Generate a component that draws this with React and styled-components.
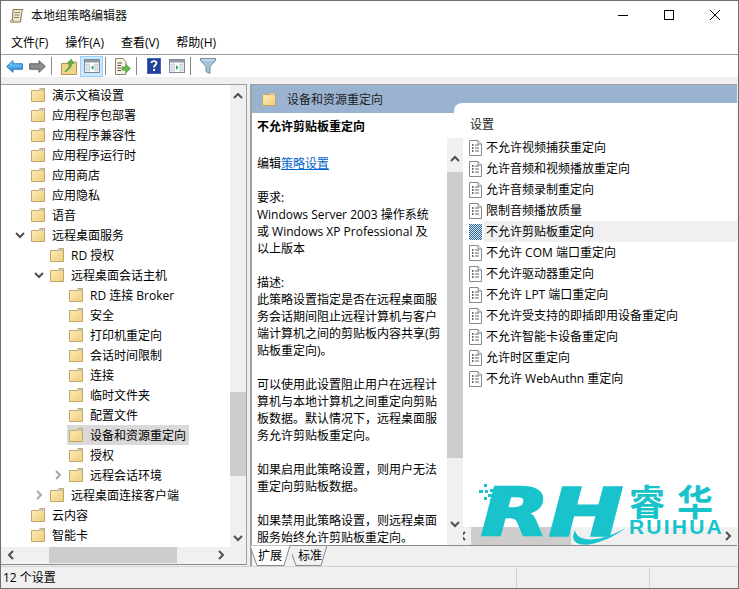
import React from 'react';
import styled, { createGlobalStyle } from 'styled-components';

const GlobalStyle = createGlobalStyle`
  html, body { margin: 0; padding: 0; background: #f0f0f0; }
  * { box-sizing: border-box; }
`;

const Window = styled.div`
  position: relative;
  width: 739px;
  height: 589px;
  display: flex;
  flex-direction: column;
  overflow: hidden;
  background: #f0f0f0;
  border: 1px solid #6f6f6f;
  color: #000;
  font: 12px/17px "Open Sans", "Noto Sans CJK SC", sans-serif;
`;

const TitleBar = styled.div`
  height: 29px;
  flex: none;
  display: flex;
  align-items: center;
  background: #fff;
  padding-left: 8px;
  color: #111;
`;

const TitleText = styled.span`
  margin-left: 6px;
  flex: 1;
  margin-top: -1px;
`;

const WinButton = styled.div`
  width: 46px;
  height: 29px;
  display: flex;
  align-items: center;
  justify-content: center;
  margin-top: -1px;
`;

const MenuBar = styled.div`
  height: 24px;
  flex: none;
  display: flex;
  align-items: center;
  gap: 17px;
  background: #fff;
  padding: 1px 0 0 10px;
`;

const ToolBar = styled.div`
  height: 23px;
  flex: none;
  display: flex;
  align-items: center;
  background: #fff;
  border-top: 1px solid #a0a0a0;
  padding-left: 2px;
  margin-bottom: 7px;
`;

const ToolButton = styled.div`
  width: 23px;
  height: 21px;
  display: flex;
  align-items: center;
  justify-content: center;
  background: ${p => (p.$active ? '#cce8ff' : 'transparent')};
  border: 1px solid ${p => (p.$active ? '#99d1ff' : 'transparent')};
`;

const ToolSep = styled.div`
  width: 1px;
  height: 18px;
  background: #888;
  margin: 0 5px 0 2px;
`;

const Main = styled.div`
  flex: 1;
  min-height: 0;
  display: flex;
  gap: 3px;
`;

const TreePane = styled.div`
  width: 246px;
  flex: none;
  display: flex;
  flex-direction: column;
  border-top: 1px solid #a0a0a0;
  border-right: 1px solid #a0a0a0;
  border-bottom: 1px solid #8a8a8a;
  margin-bottom: 1px;
`;

const TreeBody = styled.div`
  height: 462px;
  flex: none;
  display: flex;
  background: #fff;
`;

const TreeList = styled.div`
  flex: 1;
  overflow: hidden;
`;

const TreeRow = styled.div`
  height: 20px;
  display: flex;
  align-items: center;
  padding-left: ${p => 9 + p.$depth * 19}px;
`;

const Twist = styled.div`
  width: 19px;
  flex: none;
  display: flex;
  justify-content: center;
`;

const TreeLabel = styled.div`
  height: 20px;
  display: flex;
  align-items: center;
  gap: 7px;
  padding: 0 3px 0 2px;
  white-space: nowrap;
  background: ${p => (p.$selected ? '#d9d9d9' : 'transparent')};
`;

const VTrack = styled.div`
  width: ${p => p.$width}px;
  flex: none;
  display: flex;
  flex-direction: column;
  background: #f0f0f0;
  margin-top: ${p => p.$top || 0}px;
  position: relative;
  z-index: 1;
`;

const VThumb = styled.div`
  height: ${p => p.$size}px;
  margin-top: ${p => p.$offset}px;
  background: #cdcdcd;
  flex: none;
`;

const ArrowBox = styled.div`
  flex: none;
  height: ${p => (p.$h ? `${p.$h}px` : 'auto')};
  width: ${p => (p.$w ? `${p.$w}px` : 'auto')};
  margin-top: ${p => (p.$end ? 'auto' : '0')};
  margin-left: ${p => (p.$right ? 'auto' : '0')};
  display: flex;
  align-items: center;
  justify-content: center;
`;

const HTrack = styled.div`
  height: ${p => p.$height}px;
  flex: none;
  display: flex;
  background: #f0f0f0;
  padding-right: ${p => p.$corner || 0}px;
`;

const HThumb = styled.div`
  width: ${p => p.$size}px;
  margin-left: ${p => p.$offset}px;
  background: #cdcdcd;
  flex: none;
`;

const RightPane = styled.div`
  flex: 1;
  min-width: 0;
  display: flex;
  flex-direction: column;
  border-top: 1px solid #a0a0a0;
  border-left: 2px solid #a0a0a0;
  margin-right: 1px;
`;

const PaneHeader = styled.div`
  height: 28px;
  flex: none;
  display: flex;
  align-items: center;
  gap: 11px;
  padding: 0 0 0 10px;
  background: #9ab3d1;
  color: #222;
`;

const PaneBody = styled.div`
  height: 432px;
  flex: none;
  display: flex;
  background: #fff;
`;

const DescCol = styled.div`
  width: 195px;
  flex: none;
  overflow: hidden;
  padding: 5px 0 0 5px;
`;

const DescTitle = styled.div`
  font-weight: 700;
  margin-bottom: 20px;
`;

const DescPara = styled.p`
  margin: 0 0 17px;
  white-space: nowrap;
`;

const DescLine = styled.span`
  display: block;
`;

const PolicyLink = styled.a`
  color: #0066cc;
  text-decoration: underline;
`;

const ListCol = styled.div`
  flex: 1;
  min-width: 0;
  margin: -10px 0 0 -9px;
  display: flex;
  flex-direction: column;
  background: #fff;
  border-top-left-radius: 8px;
  position: relative;
`;

const ListArea = styled.div`
  height: 424px;
  flex: none;
  padding-left: 15px;
`;

const ListHeading = styled.div`
  height: 34px;
  padding: 13px 0 0 1px;
  color: #222;
`;

const ListRow = styled.div`
  height: 21px;
  display: flex;
  align-items: center;
`;

const ListLabel = styled.div`
  flex: 1;
  height: 21px;
  margin-left: 2px;
  padding-left: 2px;
  display: flex;
  align-items: center;
  white-space: nowrap;
  background: ${p => (p.$selected ? '#f0f0f0' : 'transparent')};
`;

const TabBar = styled.div`
  height: 21px;
  flex: none;
  display: flex;
  gap: 2px;
  border-top: 1px solid #8a8a8a;
  margin-left: -2px;
`;

const Tab = styled.div`
  position: relative;
  width: ${p => p.$width}px;
  height: 21px;
  margin-top: -1px;
  display: flex;
  align-items: center;
  justify-content: center;
`;

const TabShape = styled.svg`
  position: absolute;
  inset: 0;
`;

const TabText = styled.span`
  position: relative;
`;

const StatusBar = styled.div`
  height: 22px;
  flex: none;
  display: flex;
  align-items: center;
  border-top: 1px solid #d2d2d2;
`;

const StatusCell = styled.div`
  width: ${p => p.$width}px;
  height: 20px;
  padding-left: 2px;
  border-right: 1px solid #d2d2d2;
  display: flex;
  align-items: center;
`;

const Logo = styled.div`
  position: absolute;
  left: 477px;
  top: 481px;
  width: 250px;
  height: 66px;
  color: #18c3cb;
  pointer-events: none;
`;

const LogoMark = styled.span`
  position: absolute;
  left: 3px;
  top: -4px;
  font: italic 700 66px/70px "DejaVu Sans", sans-serif;
  transform: scaleX(1.34);
  transform-origin: left top;
  -webkit-text-stroke: 2.4px #18c3cb;
`;

const LogoCn = styled.span`
  position: absolute;
  left: 151px;
  top: 0;
  font: 700 36px/36px "Noto Sans CJK SC", sans-serif;
  letter-spacing: 12px;
  white-space: nowrap;
`;

const LogoEn = styled.span`
  position: absolute;
  left: 151px;
  top: 36px;
  font: 700 21px/17px "Liberation Sans", sans-serif;
  letter-spacing: 2.2px;
`;

const LogoArt = styled.svg`
  position: absolute;
  inset: 0;
  overflow: visible;
`;

const Chevron = ({ dir, color = '#505050' }) => {
  const d = {
    up: 'M1 6 L5 2 L9 6',
    down: 'M1 2 L5 6 L9 2',
    left: 'M6 1 L2 5 L6 9',
    right: 'M2 1 L6 5 L2 9',
  }[dir];
  const horizontal = dir === 'up' || dir === 'down';
  return (
    <svg width={horizontal ? 10 : 8} height={horizontal ? 8 : 10} viewBox={horizontal ? '0 0 10 8' : '0 0 8 10'}>
      <path d={d} fill="none" stroke={color} strokeWidth="2" />
    </svg>
  );
};

const Folder = () => (
  <svg width="14" height="14" viewBox="0 0 14 14" style={{ flex: 'none' }}>
    <defs>
      <linearGradient id="fold" x1="0" y1="0" x2="1" y2="1">
        <stop offset="0" stopColor="#fdeeb8" />
        <stop offset="1" stopColor="#efcd7e" />
      </linearGradient>
    </defs>
    <path d="M0.5 2.5 H8 L9 0.5 H13.5 V13.5 H0.5 Z" fill="url(#fold)" stroke="#c4a566" />
    <path d="M9.5 1.5 H13 V3 H9 Z" fill="#9ec4e0" />
  </svg>
);

const DocIcon = () => (
  <svg width="13" height="16" viewBox="0 0 13 16" style={{ flex: 'none' }}>
    <path d="M0.5 0.5 H9 L12.5 4 V15.5 H0.5 Z" fill="#fff" stroke="#8a8a8a" />
    <path d="M9 0.5 V4 H12.5" fill="#eee" stroke="#8a8a8a" />
    <path d="M3 5 H4.5 M3 8 H4.5 M3 11 H4.5" stroke="#333" strokeWidth="1.4" />
    <path d="M6 5 H10 M6 8 H10 M6 11 H10" stroke="#666" />
  </svg>
);

const DocSelected = () => (
  <svg width="13" height="16" viewBox="0 0 13 16" style={{ flex: 'none' }}>
    <defs>
      <pattern id="checker" width="2" height="2" patternUnits="userSpaceOnUse">
        <rect width="2" height="2" fill="#dfe6ee" />
        <rect width="1" height="1" fill="#27639c" />
        <rect x="1" y="1" width="1" height="1" fill="#27639c" />
      </pattern>
    </defs>
    <rect width="13" height="16" fill="url(#checker)" />
  </svg>
);

const ScrollIcon = () => (
  <svg width="16" height="16" viewBox="0 0 16 16">
    <path d="M4 1.5 H14 C13 3 13 4 12.5 6 L11.5 14 H2 C3.5 13 3.5 12 3.5 10 Z" fill="#efe6c4" stroke="#7f7660" />
    <path d="M5.5 4.5 H11 M5.5 7 H10.5 M5 9.5 H10" stroke="#8d8670" />
    <path d="M1 13 C2 11.5 4 11.5 5 13 C4 15 2 15 1 13 Z" fill="#d9cda3" stroke="#7f7660" strokeWidth="0.7" />
  </svg>
);

const BackIcon = () => (
  <svg width="17" height="13" viewBox="0 0 17 13">
    <defs>
      <linearGradient id="blue" x1="0" y1="0" x2="0" y2="1">
        <stop offset="0" stopColor="#8fdcff" />
        <stop offset="1" stopColor="#1b86d8" />
      </linearGradient>
    </defs>
    <path d="M0.7 6.5 L7 0.7 V3.8 H16.3 V9.2 H7 V12.3 Z" fill="url(#blue)" stroke="#2472b8" />
  </svg>
);

const ForwardIcon = () => (
  <svg width="17" height="13" viewBox="0 0 17 13">
    <path d="M16.3 6.5 L10 0.7 V3.8 H0.7 V9.2 H10 V12.3 Z" fill="#8c8c8c" stroke="#5f5f5f" />
  </svg>
);

const UpIcon = () => (
  <svg width="16" height="17" viewBox="0 0 16 17">
    <path d="M0.5 5.5 H6 L7 4 H15.5 V16.5 H0.5 Z" fill="#f1d48b" stroke="#b8974f" />
    <path d="M4 13 C6.5 11.5 8 9 8.5 6 L6.5 6 L10 1 L13 5.5 L11 5.5 C10.5 9 8 12.5 4 14 Z" fill="#5fb048" stroke="#3c8a2e" strokeWidth="0.5" />
  </svg>
);

const PaneIcon = ({ side }) => (
  <svg width="16" height="14" viewBox="0 0 16 14">
    <rect x="0.5" y="0.5" width="15" height="13" fill="#fff" stroke="#7f8a96" />
    <rect x="1" y="1" width="14" height="2.5" fill="#8f9aa6" />
    <rect x="2" y="5" width="3.5" height="7" fill="#dfe7ef" stroke="#a9b5c2" strokeWidth="0.6" />
    <rect x="11" y="5" width="3" height="7" fill="#dfe7ef" stroke="#a9b5c2" strokeWidth="0.6" />
    {side === 'left'
      ? <path d="M9.5 6 V11 L7 8.5 Z" fill="#2fa04a" />
      : <path d="M7 6 V11 L9.5 8.5 Z" fill="#2fa04a" />}
  </svg>
);

const ExportIcon = () => (
  <svg width="17" height="17" viewBox="0 0 17 17">
    <path d="M1.5 0.5 H9 L12 3.5 V16.5 H1.5 Z" fill="#f7f2dc" stroke="#8a8672" />
    <path d="M3.5 5 H8 M3.5 7.5 H7 M3.5 10 H7 M3.5 12.5 H7" stroke="#555" />
    <path d="M8 9 H12 V6.5 L16.5 10.5 L12 14.5 V12 H8 Z" fill="#69bb4c" stroke="#3f8d2c" strokeWidth="0.7" />
  </svg>
);

const HelpIcon = () => (
  <svg width="14" height="16" viewBox="0 0 14 16">
    <rect width="14" height="16" fill="#23409b" />
    <rect x="0.5" y="0.5" width="13" height="15" fill="none" stroke="#5f7bd0" strokeWidth="0.6" />
    <path d="M4.5 5 C4.5 2.5 9.5 2.5 9.5 5 C9.5 7 7 7 7 9.5" fill="none" stroke="#fff" strokeWidth="1.8" />
    <rect x="6" y="11" width="2" height="2" fill="#fff" />
  </svg>
);

const FilterIcon = () => (
  <svg width="16" height="16" viewBox="0 0 16 16">
    <path d="M0.5 0.5 H15.5 V2.5 L10 8.5 V15.5 L6 13.5 V8.5 L0.5 2.5 Z" fill="#a8c4d8" stroke="#6a8ba3" />
    <path d="M2 1.8 H14" stroke="#e0edf5" />
  </svg>
);

const treeItems = [
  { d: 0, t: '演示文稿设置' },
  { d: 0, t: '应用程序包部署' },
  { d: 0, t: '应用程序兼容性' },
  { d: 0, t: '应用程序运行时' },
  { d: 0, t: '应用商店' },
  { d: 0, t: '应用隐私' },
  { d: 0, t: '语音' },
  { d: 0, t: '远程桌面服务', open: true },
  { d: 1, t: 'RD 授权' },
  { d: 1, t: '远程桌面会话主机', open: true },
  { d: 2, t: 'RD 连接 Broker' },
  { d: 2, t: '安全' },
  { d: 2, t: '打印机重定向' },
  { d: 2, t: '会话时间限制' },
  { d: 2, t: '连接' },
  { d: 2, t: '临时文件夹' },
  { d: 2, t: '配置文件' },
  { d: 2, t: '设备和资源重定向', selected: true },
  { d: 2, t: '授权' },
  { d: 2, t: '远程会话环境', closed: true },
  { d: 1, t: '远程桌面连接客户端', closed: true },
  { d: 0, t: '云内容' },
  { d: 0, t: '智能卡' },
];

const settings = [
  '不允许视频捕获重定向',
  '允许音频和视频播放重定向',
  '允许音频录制重定向',
  '限制音频播放质量',
  '不允许剪贴板重定向',
  '不允许 COM 端口重定向',
  '不允许驱动器重定向',
  '不允许 LPT 端口重定向',
  '不允许受支持的即插即用设备重定向',
  '不允许智能卡设备重定向',
  '允许时区重定向',
  '不允许 WebAuthn 重定向',
];

const paragraphs = [
  ['要求:', 'Windows Server 2003 操作系统', '或 Windows XP Professional 及', '以上版本'],
  ['描述:', '此策略设置指定是否在远程桌面服', '务会话期间阻止远程计算机与客户', '端计算机之间的剪贴板内容共享(剪', '贴板重定向)。'],
  ['可以使用此设置阻止用户在远程计', '算机与本地计算机之间重定向剪贴', '板数据。默认情况下，远程桌面服', '务允许剪贴板重定向。'],
  ['如果启用此策略设置，则用户无法', '重定向剪贴板数据。'],
  ['如果禁用此策略设置，则远程桌面', '服务始终允许剪贴板重定向。'],
];

const menus = ['文件(F)', '操作(A)', '查看(V)', '帮助(H)'];

function App() {
  return (
    <Window>
      <GlobalStyle />
      <TitleBar>
        <ScrollIcon />
        <TitleText>本地组策略编辑器</TitleText>
        <WinButton>
          <svg width="10" height="10" viewBox="0 0 10 10"><path d="M0 5.5 H10" stroke="#000" /></svg>
        </WinButton>
        <WinButton>
          <svg width="10" height="10" viewBox="0 0 10 10"><rect x="0.5" y="0.5" width="9" height="9" fill="none" stroke="#000" /></svg>
        </WinButton>
        <WinButton>
          <svg width="10" height="10" viewBox="0 0 10 10"><path d="M0 0 L10 10 M10 0 L0 10" stroke="#000" /></svg>
        </WinButton>
      </TitleBar>

      <MenuBar>
        {menus.map(m => <span key={m}>{m}</span>)}
      </MenuBar>

      <ToolBar>
        <ToolButton><BackIcon /></ToolButton>
        <ToolButton><ForwardIcon /></ToolButton>
        <ToolSep />
        <ToolButton><UpIcon /></ToolButton>
        <ToolButton $active><PaneIcon side="left" /></ToolButton>
        <ToolSep />
        <ToolButton><ExportIcon /></ToolButton>
        <ToolSep />
        <ToolButton><HelpIcon /></ToolButton>
        <ToolButton><PaneIcon side="right" /></ToolButton>
        <ToolSep />
        <ToolButton><FilterIcon /></ToolButton>
      </ToolBar>

      <Main>
        <TreePane>
          <TreeBody>
            <TreeList>
              {treeItems.map(item => (
                <TreeRow key={item.t} $depth={item.d}>
                  <Twist>
                    {item.open && <Chevron dir="down" color="#505050" />}
                    {item.closed && <Chevron dir="right" color="#a6a6a6" />}
                  </Twist>
                  <TreeLabel $selected={item.selected}>
                    <Folder />
                    <span>{item.t}</span>
                  </TreeLabel>
                </TreeRow>
              ))}
            </TreeList>
            <VTrack $width={16}>
              <ArrowBox $h={22}><Chevron dir="up" /></ArrowBox>
              <VThumb $offset={285} $size={84} />
              <ArrowBox $h={18} $end><Chevron dir="down" /></ArrowBox>
            </VTrack>
          </TreeBody>
          <HTrack $height={16} $corner={16}>
            <ArrowBox $w={20}><Chevron dir="left" /></ArrowBox>
            <HThumb $offset={28} $size={128} />
            <ArrowBox $w={18} $right><Chevron dir="right" /></ArrowBox>
          </HTrack>
        </TreePane>

        <RightPane>
          <PaneHeader>
            <Folder />
            <span>设备和资源重定向</span>
          </PaneHeader>
          <PaneBody>
            <DescCol>
              <DescTitle>不允许剪贴板重定向</DescTitle>
              <DescPara>编辑<PolicyLink>策略设置</PolicyLink></DescPara>
              {paragraphs.map(lines => (
                <DescPara key={lines[0]}>
                  {lines.map(l => <DescLine key={l}>{l}</DescLine>)}
                </DescPara>
              ))}
            </DescCol>
            <VTrack $width={16} $top={25}>
              <ArrowBox $h={42}><Chevron dir="up" /></ArrowBox>
              <VThumb $offset={-8} $size={286} />
              <ArrowBox $h={42} $end><Chevron dir="down" /></ArrowBox>
            </VTrack>
            <ListCol>
              <ListArea>
                <ListHeading>设置</ListHeading>
                {settings.map((s, i) => (
                  <ListRow key={s}>
                    {i === 4 ? <DocSelected /> : <DocIcon />}
                    <ListLabel $selected={i === 4}>{s}</ListLabel>
                  </ListRow>
                ))}
              </ListArea>
              <HTrack $height={18}>
                <ArrowBox $w={17}><Chevron dir="left" /></ArrowBox>
                <HThumb $offset={0} $size={100} />
                <ArrowBox $w={18} $right><Chevron dir="right" /></ArrowBox>
              </HTrack>
            </ListCol>
          </PaneBody>
          <TabBar>
            <Tab $width={40}>
              <TabShape width="40" height="21" viewBox="0 0 40 21">
                <path d="M0 0.5 L7 20.5 H34 L40 0.5" fill="#fff" stroke="#8a8a8a" />
              </TabShape>
              <TabText>扩展</TabText>
            </Tab>
            <Tab $width={36}>
              <TabShape width="36" height="21" viewBox="0 0 36 21">
                <path d="M0 9 L4 20.5 H29 L35 0.5" fill="#f0f0f0" stroke="#8a8a8a" />
              </TabShape>
              <TabText>标准</TabText>
            </Tab>
          </TabBar>
        </RightPane>
      </Main>

      <StatusBar>
        <StatusCell $width={516}>12 个设置</StatusCell>
        <StatusCell $width={133} />
      </StatusBar>

      <Logo>
        <LogoArt viewBox="0 0 250 66">
          <g fill="#18c3cb">
            <rect x="6" y="2" width="3" height="3" />
            <rect x="1" y="8" width="4" height="3" />
            <rect x="7" y="8" width="3" height="3" />
            <rect x="12" y="7" width="4" height="3" />
            <rect x="18" y="6" width="3" height="3" />
            <rect x="10" y="12" width="4" height="3" />
            <rect x="16" y="11" width="3" height="3" />
            <rect x="6" y="15" width="3" height="3" />
            <rect x="12" y="17" width="3" height="2" />
          </g>
          <path d="M97 48 C99 60 118 62 148 46 C126 62 96 70 95 54 Z" fill="#18c3cb" />
        </LogoArt>
        <LogoMark>RH</LogoMark>
        <LogoCn>睿华</LogoCn>
        <LogoEn>RUIHUA</LogoEn>
      </Logo>
    </Window>
  );
}

export default App;
